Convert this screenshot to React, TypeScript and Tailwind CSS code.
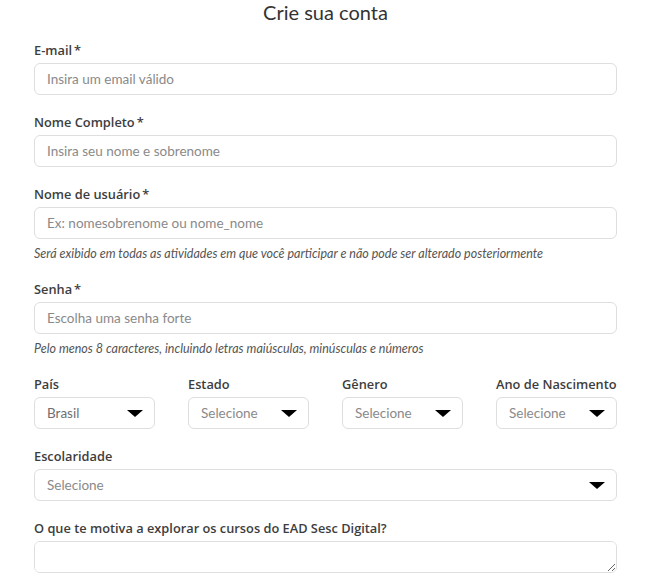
import { ReactNode } from "react";

const font = { fontFamily: "Lato, 'Noto Sans', sans-serif" };
const labelFont = { fontFamily: "'Open Sans', 'Noto Sans', sans-serif" };

function Label({ children, required }: { children: ReactNode; required?: boolean }) {
  return (
    <label
      className="block text-[12.8px] leading-4 font-semibold text-[#3d3d3d] mb-[5px] whitespace-nowrap"
      style={labelFont}
    >
      {children}
      {required && <span className="ml-[2px]">*</span>}
    </label>
  );
}

function TextField({ placeholder }: { placeholder: string }) {
  return (
    <input
      placeholder={placeholder}
      className="block w-full h-8 rounded-[6px] border border-[#dedede] bg-white px-[12px] text-[13.5px] text-[#333] placeholder:text-[#8a8a8a] outline-none"
    />
  );
}

function Caret() {
  return (
    <svg width="16" height="7" viewBox="0 0 16 7" className="shrink-0">
      <path d="M0 0 H16 L8 7 Z" fill="#000" />
    </svg>
  );
}

function SelectBox({ value, muted }: { value: string; muted?: boolean }) {
  return (
    <div className="flex items-center justify-between h-8 rounded-[6px] border border-[#dedede] bg-white pl-[12px] pr-[11px]">
      <span className={`text-[13.5px] ${muted ? "text-[#8a8a8a]" : "text-[#707070]"}`}>
        {value}
      </span>
      <Caret />
    </div>
  );
}

function Hint({ children }: { children: ReactNode }) {
  return (
    <p className="mt-[7px] text-[12.5px] leading-4 italic text-[#555]">{children}</p>
  );
}

export default function App() {
  return (
    <div className="min-h-screen bg-white" style={font}>
      <div className="pl-[34px] pr-[33px]">
        <h1 className="text-center text-[20px] leading-6 font-normal text-[#333] mb-[18px]">
          Crie sua conta
        </h1>

        <div className="flex flex-col gap-[19px]">
          <div>
            <Label required>E-mail</Label>
            <TextField placeholder="Insira um email válido" />
          </div>

          <div>
            <Label required>Nome Completo</Label>
            <TextField placeholder="Insira seu nome e sobrenome" />
          </div>

          <div>
            <Label required>Nome de usuário</Label>
            <TextField placeholder="Ex: nomesobrenome ou nome_nome" />
            <Hint>
              Será exibido em todas as atividades em que você participar e não pode ser alterado
              posteriormente
            </Hint>
          </div>

          <div>
            <Label required>Senha</Label>
            <TextField placeholder="Escolha uma senha forte" />
            <Hint>Pelo menos 8 caracteres, incluindo letras maiúsculas, minúsculas e números</Hint>
          </div>

          <div className="grid grid-cols-4 gap-x-[33px]">
            <div>
              <Label>País</Label>
              <SelectBox value="Brasil" />
            </div>
            <div>
              <Label>Estado</Label>
              <SelectBox value="Selecione" muted />
            </div>
            <div>
              <Label>Gênero</Label>
              <SelectBox value="Selecione" muted />
            </div>
            <div>
              <Label>Ano de Nascimento</Label>
              <SelectBox value="Selecione" muted />
            </div>
          </div>

          <div>
            <Label>Escolaridade</Label>
            <SelectBox value="Selecione" muted />
          </div>

          <div>
            <Label>O que te motiva a explorar os cursos do EAD Sesc Digital?</Label>
            <textarea className="block w-full h-8 rounded-[6px] border border-[#dedede] bg-white px-[12px] py-[6px] text-[13px] outline-none" />
          </div>
        </div>
      </div>
    </div>
  );
}
